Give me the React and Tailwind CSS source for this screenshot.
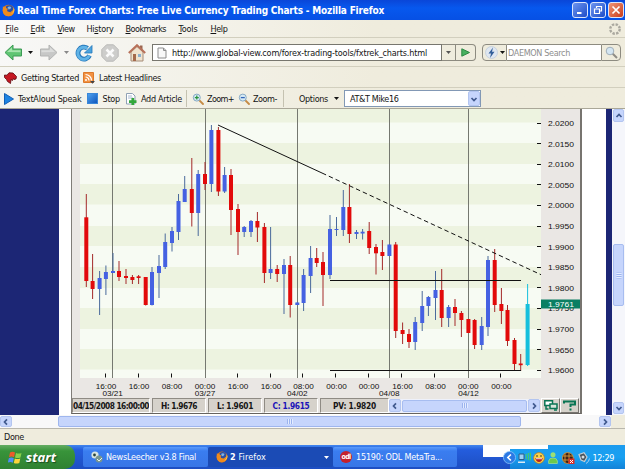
import { useLayoutEffect, useRef } from 'react';

// Single-line label whose tracking is adjusted so that it fills w pixels.
function Label({ w, children, className = '' }) {
  const ref = useRef(null);
  useLayoutEffect(() => {
    const el = ref.current;
    el.style.letterSpacing = '0px';
    const natural = el.getBoundingClientRect().width;
    el.style.letterSpacing = `${(w - natural) / el.textContent.length}px`;
  }, [w]);
  return (
    <span ref={ref} className={`block w-max flex-none pt-px whitespace-nowrap ${className}`}>
      {children}
    </span>
  );
}

const RED = '#e20a0a';
const BLUE = '#4561e2';
const CYAN = '#16bfdc';

// x, wick top, wick bottom, body top, body bottom, direction
const candles = [
  [86.3, 194, 287, 217.3, 281, 'r'], [92.6, 254, 299, 281, 289, 'r'], [99.6, 271, 315, 278, 289, 'b'],
  [105.9, 265.5, 295, 272, 279, 'b'], [113, 253, 273, 271, 273, 'b'], [119, 261, 281, 271, 277, 'r'],
  [126, 269, 284, 276, 278, 'r'], [132.4, 275, 284, 277, 280, 'r'], [138.6, 275, 284, 276.3, 278, 'r'],
  [145.7, 277, 305.5, 277, 305, 'r'], [152, 267, 305.5, 272, 305, 'b'], [159, 255, 298, 266, 273, 'b'],
  [165.2, 233.5, 269, 242, 267, 'b'], [172, 227, 251.5, 231, 243, 'b'], [178.5, 194, 240, 201, 232, 'b'],
  [184.7, 176, 202, 189, 202, 'b'], [191.8, 158, 226.5, 189, 213, 'r'], [198.2, 170, 236, 174, 213, 'b'],
  [205, 162, 190, 174, 184, 'r'], [211.4, 125, 192, 130, 184, 'b'], [218.4, 127, 196, 130, 191.5, 'r'],
  [224.6, 167, 193, 175, 191.5, 'b'], [231, 169, 235, 175, 210, 'r'], [238, 204, 255, 209, 232, 'r'],
  [244.2, 226, 237, 227, 232, 'b'], [251, 220, 237, 221, 232, 'b'], [257.4, 212, 242, 221, 227.5, 'r'],
  [264.4, 223, 283, 227, 273, 'r'], [270.6, 227, 279, 269, 273, 'b'], [277.2, 265, 282, 269, 274, 'r'],
  [284, 259, 314, 265, 274, 'b'], [290.2, 256, 317.5, 265, 305, 'r'], [297.3, 302, 305, 302.5, 305, 'b'],
  [303.6, 269, 311, 275, 303, 'b'], [310.6, 246, 293, 258, 276, 'b'], [316.7, 248, 267, 258, 263, 'r'],
  [323, 252, 306, 262, 275, 'r'], [330, 215, 279, 229, 275, 'b'], [336.5, 217, 236, 229, 230, 'b'],
  [343.3, 190, 236, 207, 230, 'b'], [349.4, 184, 243, 207, 234, 'r'], [356.5, 230, 239, 232, 234, 'b'],
  [362.6, 229, 239.5, 231.7, 233.5, 'b'], [369.2, 222, 254, 231, 248, 'r'], [376, 244, 274.5, 247, 253.3, 'r'],
  [382.4, 240, 270, 252, 256, 'r'], [389.4, 244.5, 256, 244.5, 256, 'b'], [395.7, 242, 338, 244.5, 331, 'r'],
  [402.6, 322.5, 344, 330, 334, 'r'], [409, 329, 348, 334, 342, 'r'], [415.2, 317, 350, 322, 342, 'b'],
  [422.2, 291, 331, 306, 323, 'b'], [428.4, 296, 316, 297, 306, 'b'], [435.5, 271, 320, 290, 298, 'b'],
  [441.7, 269, 327, 290, 318, 'r'], [448.6, 305, 327, 307, 318, 'b'], [455, 299, 326, 307, 313, 'r'],
  [461.4, 311, 337, 313, 320, 'r'], [468.4, 319, 333, 319, 333, 'r'], [474.6, 319, 349, 320, 345, 'r'],
  [481.7, 317, 350, 326, 345, 'b'], [488, 256, 336, 260, 327, 'b'], [494.7, 249, 312, 260, 305, 'r'],
  [501.4, 288, 324, 304, 311, 'r'], [507.5, 305, 346, 310, 341, 'r'], [514.5, 338, 370, 340, 364, 'r'],
  [520.7, 354, 371, 363.5, 365.2, 'r'], [527.6, 284, 366, 304, 365, 'c'],
];

const body = { r: RED, b: BLUE, c: CYAN };
const wick = { r: '#a32a2a', b: '#4a6a9c', c: CYAN };

const times = [
  [106, '16:00'], [139, '16:00'], [172, '08:00'], [205, '00:00'], [238, '16:00'], [271, '16:00'], [303.5, '08:00'],
  [336.5, '00:00'], [369, '00:00'], [402.5, '16:00'], [435.5, '08:00'], [468.3, '00:00'], [501.4, '00:00'],
];
const dates = [[112.7, '03/21'], [205, '03/27'], [297.3, '04/02'], [389.3, '04/08'], [468.5, '04/12']];
const prices = ['2.0200', '2.0150', '2.0100', '2.0050', '2.0000', '1.9950', '1.9900', '1.9850', '1.9800', '1.9750', '1.9700', '1.9650', '1.9600'];
const bands = [[109, 122.5], [143, 164], [184, 204.5], [226, 246], [267, 288], [308, 329], [349, 369.5]];

function Chart() {
  return (
    <svg viewBox="72 109 508 289" className="block h-[289px] w-[508px] flex-none [font-family:'Liberation_Sans',sans-serif]">
      <rect x="72" y="109" width="508" height="289" fill="#eae7e4" />
      <rect x="80" y="109" width="461" height="269" fill="#f7fbf3" />
      {bands.map(([a, b]) => <rect key={a} x="80" y={a} width="461" height={b - a} fill="#edf3e0" />)}
      {dates.map(([x]) => <rect key={x} x={Math.floor(x)} y="109" width="1" height="269" fill="#757870" />)}
      {candles.map(([x, wt, wb, bt, bb, d]) => (
        <g key={x}>
          <rect x={x - 0.5} y={wt} width="1" height={wb - wt} fill={wick[d]} />
          <rect x={x - 2} y={bt} width="4" height={bb - bt} fill={body[d]} />
        </g>
      ))}
      <g stroke="#111" strokeWidth="1" fill="none">
        <path d="M218 125L322 173" />
        <path d="M322 173L541 274.7" strokeDasharray="4.5 3" />
        <path d="M330 280.5H521M330 370.5H521" />
        {times.filter(([x]) => x !== 205 && x !== 468.3).map(([x]) => <path key={x} d={`M${Math.floor(x) - 0.5} 373.5V377.5`} />)}
        {prices.map((p, i) => <path key={p} d={`M537 ${Math.floor(123 + i * 20.6) + 0.5}H541`} />)}
      </g>
      <g fontSize="8" fill="#111" textAnchor="middle">
        {times.map(([x, t]) => <text key={x} x={x} y="388.7" textLength="20.5" lengthAdjust="spacingAndGlyphs">{t}</text>)}
        {dates.map(([x, t]) => <text key={x} x={x} y="396" textLength="20.5" lengthAdjust="spacingAndGlyphs">{t}</text>)}
        {prices.map((t, i) => <text key={t} x="561" y={126 + i * 20.6} textLength="26" lengthAdjust="spacingAndGlyphs">{t}</text>)}
      </g>
      <rect x="541" y="299.5" width="39" height="9" fill="#0a7f63" />
      <text x="561" y="307" fontSize="8" fill="#fff" textAnchor="middle" textLength="26" lengthAdjust="spacingAndGlyphs">1.9761</text>
    </svg>
  );
}

function FirefoxIcon({ className }) {
  return (
    <svg viewBox="0 0 14 14" className={`flex-none ${className}`}>
      <circle cx="7" cy="7" r="6.3" fill="#ec7a13" />
      <circle cx="7.8" cy="5.6" r="4.3" fill="#2a4fa6" />
      <path d="M6 3.5q2-1.5 4 0l-1 2-2 .5z" fill="#7fb4e6" />
      <path d="M1 2.5l1.6 1.2L4 3l.6 1.6 2 .6-1.2 1.3.6 1.6 3 .7 2.6-2L13 4.5c1 5-2 8.500-6 8.700C3 13.200.6 10 .8 6z" fill="#f08b1d" />
      <path d="M12.300 3.500q1.500 5-3 7.500 4-1 4-5z" fill="#fbd85b" />
    </svg>
  );
}

function Chevron({ d, className = '' }) {
  const paths = { up: 'M1.500 5L4 2.500 6.500 5', down: 'M1.500 3L4 5.500 6.500 3', left: 'M5 1.300L2.500 4 5 6.700', right: 'M3 1.300L5.500 4 3 6.700' };
  return (
    <span className={`flex flex-none items-center justify-center rounded-[2px] border border-[#b3c5f0] bg-[#c6d5fc] ${className}`}>
      <svg viewBox="0 0 8 8" className="size-2"><path d={paths[d]} fill="none" stroke="#40598e" strokeWidth="1.700" /></svg>
    </span>
  );
}

function Caret({ className = '' }) {
  return <svg viewBox="0 0 5 3" className={`h-[3px] w-[5px] flex-none ${className}`}><path d="M0 0H5L2.500 3z" fill="currentColor" /></svg>;
}

function Arrow({ flip, a, b, c }) {
  return (
    <svg viewBox="0 0 19 17" className={`h-[17px] w-[19px] flex-none ${flip ? '-scale-x-100' : ''}`}>
      <path d="M1 8.500L9 1V5H17.500V12H9V16z" fill={a} stroke={c} strokeWidth="1" strokeLinejoin="round" />
      <path d="M3 8L8 3.300V6.300H16.500V8.300z" fill={b} />
    </svg>
  );
}

function Magnifier({ sign }) {
  return (
    <svg viewBox="0 0 12 12" className="size-3 flex-none">
      <path d="M7 7l4 4" stroke="#c58a45" strokeWidth="1.800" strokeLinecap="round" />
      <circle cx="4.800" cy="4.600" r="3.500" fill="#d8eaf4" stroke="#86a9c4" />
      <path d={sign === '+' ? 'M2.800 4.600H6.800M4.800 2.600V6.600' : 'M2.800 4.600H6.800'} stroke={sign === '+' ? '#2b9440' : '#3265b8'} strokeWidth="1.300" />
    </svg>
  );
}

function WindowButton({ red, children }) {
  return (
    <span className={`flex size-4 flex-none items-center justify-center rounded-[3px] border border-[#dbe5fb] ${red ? 'bg-linear-to-br from-[#ee9476] to-[#c93a12]' : 'bg-linear-to-br from-[#6d93ef] to-[#1e4cc8]'}`}>
      <svg viewBox="0 0 12 12" className="size-3" fill="none" stroke="#fff">{children}</svg>
    </span>
  );
}

const menu = [['File', 'F', 0, 13, 25], ['Edit', 'E', 0, 14, 27], ['View', 'V', 0, 17, 29], ['History', 's', 2, 27, 39], ['Bookmarks', 'B', 0, 40.5, 53], ['Tools', 'T', 0, 19, 32], ['Help', 'H', 0, 17, 30]];

function Cell({ cell, w, children, color = 'text-[#151515]' }) {
  return (
    <div className={`flex h-[15px] flex-none items-center justify-center overflow-hidden border border-t-[#8f8b84] border-r-white border-b-white border-l-[#8f8b84] bg-[#d6d2cb] text-[8.300px] font-bold [font-family:'DejaVu_Sans_Condensed','DejaVu_Sans',sans-serif] ${cell} ${color}`}>
      <Label w={w}>{children}</Label>
    </div>
  );
}

function Grip() {
  return <span className="h-[5px] w-[6px] bg-[repeating-linear-gradient(90deg,#9cb4ee_0_1px,#e4ecff_1px_2px)]" />;
}

export default function App() {
  return (
    <div className="flex h-[469px] w-[625px] flex-col overflow-hidden bg-[#efecdd] text-[9px] leading-none text-[#141414] [font-family:'DejaVu_Sans_Condensed','DejaVu_Sans',sans-serif]">
      <header className="flex h-5 flex-none items-center bg-linear-to-b from-[#0a46d8] via-[#0758ee] via-40% to-[#0650e4] pl-[2px] text-white">
        <FirefoxIcon className="mr-[2px] size-[13px]" />
        <Label w={367} className="text-[10px] font-bold">Real Time Forex Charts: Free Live Currency Trading Charts - Mozilla Firefox</Label>
        <div className="mr-[1px] ml-auto flex gap-[2px]">
          <WindowButton><path d="M3 9H7.500" strokeWidth="2" /></WindowButton>
          <WindowButton><path d="M4.500 4V2.500H9.500V7H8M2.500 5H7.500V9.500H2.500z" strokeWidth="1.200" /></WindowButton>
          <WindowButton red><path d="M2.500 2.500L9.500 9.500M9.500 2.500L2.500 9.500" strokeWidth="1.700" /></WindowButton>
        </div>
      </header>

      <nav className="flex h-[18px] flex-none items-center border-b border-[#d2cfbe] bg-linear-to-r from-[#fafafa] to-[#efecdd] to-60% pt-px pl-[5.500px]">
        {menu.map(([name, key, at, w, step]) => (
          <div key={name} className="flex-none" style={{ width: step }}>
            <Label w={w}>{name.slice(0, at)}<u className="underline-offset-1">{key}</u>{name.slice(at + 1)}</Label>
          </div>
        ))}
        <svg viewBox="0 0 12 12" className="mr-[4px] ml-auto size-3">
          <circle cx="6" cy="6" r="4.700" fill="none" stroke="#aaa89f" strokeWidth="2.400" strokeDasharray="2.400 1.290" />
        </svg>
      </nav>

      <div className="flex h-[29px] flex-none items-center border-b border-[#d2cfbe] bg-linear-to-r from-[#f8f8f7] to-[#efecdd] to-60% pt-px pl-[4px]">
        <Arrow a="#5fc573" b="#a6e4ae" c="#3c9a55" />
        <Caret className="mr-[6px] ml-[5px]" />
        <Arrow flip a="#c7c8c7" b="#dcdddc" c="#b3b4b3" />
        <Caret className="mr-[6px] ml-[6px] text-[#888]" />
        <svg viewBox="0 0 18 18" className="size-[18px] flex-none">
          <path d="M14.500 11.500A6 6 0 1 1 12.500 4.200" fill="none" stroke="#2577ba" strokeWidth="4.800" />
          <path d="M14.300 11.500A6 6 0 1 1 12.300 4.400" fill="none" stroke="#60b3e6" strokeWidth="3" />
          <path d="M17 1.500V9H9.500z" fill="#4aa3de" stroke="#2577ba" strokeWidth=".8" />
        </svg>
        <svg viewBox="0 0 18 18" className="ml-[8px] size-[18px] flex-none">
          <path d="M5.500 .8H12.500L17.200 5.500V12.500L12.500 17.200H5.500L.8 12.500V5.500z" fill="#cdcdcb" stroke="#b9b9b7" />
          <path d="M5.500 5.500L12.500 12.500M12.500 5.500L5.500 12.500" stroke="#fafafa" strokeWidth="2.500" />
        </svg>
        <svg viewBox="0 0 18 18" className="mr-[6px] ml-[9px] size-[18px] flex-none">
          <path d="M12 1.500H14.500V7H12z" fill="#9b6650" />
          <path d="M3 8L9 2.500 15 8V17H3z" fill="#f0e3cf" stroke="#a58b76" />
          <path d="M.8 9L9 1.200 17.200 9" fill="none" stroke="#b7715a" strokeWidth="2" />
          <path d="M5 10H8V17H5z" fill="#a56a4c" /><path d="M10 10H13V13H10z" fill="#8bb0ce" />
        </svg>
        <div className="flex h-[17px] w-[290px] flex-none items-center border border-[#77766e] bg-white">
          <svg viewBox="0 0 10 12" className="ml-[4px] h-3 w-[10px] flex-none"><path d="M1 1H6.500L9 3.500V11H1z" fill="#f8f8f8" stroke="#8d8d8d" /><path d="M6.500 1V3.500H9" fill="none" stroke="#8d8d8d" /></svg>
          <Label w={255} className="ml-[5px]">http://www.global-view.com/forex-trading-tools/fxtrek_charts.html</Label>
        </div>
        <div className="flex h-[17px] w-[14px] flex-none items-center justify-center border-y border-r border-[#8d8b80]"><Caret className="text-[#555]" /></div>
        <div className="flex h-[17px] w-[20px] flex-none items-center justify-center rounded-r border-y border-r border-[#8d8b80]">
          <svg viewBox="0 0 9 9" className="size-[9px]"><path d="M.8.800L8.500 4.500.8 8.200z" fill="#48b160" stroke="#2b8942" /></svg>
        </div>
        <div className="ml-[6px] flex h-[17px] w-[25px] flex-none items-center gap-[2px] rounded-l border border-[#8d8b80] pl-[2px]">
          <svg viewBox="0 0 13 13" className="size-[13px]"><circle cx="6.500" cy="6.500" r="6" fill="#dfe7f1" stroke="#b5c5d8" strokeWidth=".6" /><path d="M8 1.500L3.500 7.500H6L5 12 9.500 5.800H7z" fill="#34609b" /></svg>
          <Caret />
        </div>
        <div className="flex h-[17px] w-[94px] flex-none items-center border-y border-[#8d8b80] bg-white pl-[1px] text-[#8e8e8e]">
          <Label w={62}>DAEMON Search</Label>
        </div>
        <div className="flex h-[17px] w-[20px] flex-none items-center justify-center rounded-r border border-[#8d8b80]">
          <svg viewBox="0 0 13 13" className="size-[13px]"><path d="M7.500 7.500L12 12" stroke="#8f8d85" strokeWidth="2" /><circle cx="5" cy="5" r="3.800" fill="#d4e6f2" stroke="#a0aeb9" /></svg>
        </div>
      </div>

      <div className="flex h-[21px] flex-none items-center border-b border-[#d2cfbe] bg-linear-to-r from-[#f7f7f4] to-[#efecdd] to-60% pt-[2px] pl-[4px]">
        <svg viewBox="0 0 13 12" className="h-3 w-[13px] flex-none"><path d="M.5 3L3 3.200 5 .8 9 1 12.500 4.500 12 7 10 7.500 9.500 6.500 8.500 8.500 7 7.500 6.500 11.500 3.500 9.500 2.500 7.500.5 5.500z" fill="#c51822" stroke="#5c080c" strokeWidth=".8" /></svg>
        <div className="w-[62px] flex-none pl-[4px]"><Label w={58}>Getting Started</Label></div>
        <svg viewBox="0 0 12 12" className="ml-[4px] size-3 flex-none">
          <path d="M.5.500H10.500V10.500H.5z" fill="#f29142" stroke="#dc792b" />
          <path d="M2.500 5a3.500 3.500 0 0 1 3.500 3.500M2.500 2.500a6 6 0 0 1 6 6" fill="none" stroke="#fff" strokeWidth="1.200" /><circle cx="3" cy="8" r="1" fill="#fff" />
          <path d="M7 9H12L9.500 11.800z" fill="#444" />
        </svg>
        <Label w={62} className="ml-[4px]">Latest Headlines</Label>
      </div>

      <div className="flex h-[21px] flex-none items-center border-b border-[#aaa798] bg-linear-to-r from-[#f5f5f0] to-[#efecdd] to-60% pt-px pl-[4px]">
        <svg viewBox="0 0 10 12" className="h-3 w-[10px] flex-none"><path d="M.5.500L9.500 6 .5 11.500z" fill="#1e84e2" stroke="#1260b5" /></svg>
        <Label w={63.500} className="ml-[4px]">TextAloud Speak</Label>
        <span className="ml-[5px] size-[11px] flex-none border border-[#3a87d8] bg-linear-to-br from-[#4da0ee] to-[#1057be]" />
        <Label w={17.500} className="ml-[5px]">Stop</Label>
        <svg viewBox="0 0 11 12" className="ml-[6px] h-3 w-[11px] flex-none"><path d="M.5.500H6.500L9 3V11H.5z" fill="#fff" stroke="#8fa0b5" /><path d="M2 3H6M2 5H7" stroke="#a9b9d2" /><path d="M3 8.700H10.500M6.800 5V12" stroke="#33a83b" strokeWidth="2.700" /></svg>
        <Label w={41} className="ml-[4px]">Add Article</Label>
        <span className="ml-[4px] h-[17px] w-px flex-none bg-[#c5c2b1]" />
        <div className="ml-[5px] flex w-[46px] flex-none items-center gap-[3px]"><Magnifier sign="+" /><Label w={27}>Zoom+</Label></div>
        <div className="flex w-[45px] flex-none items-center gap-[3px]"><Magnifier sign="-" /><Label w={24}>Zoom-</Label></div>
        <div className="flex h-[17px] w-[49px] flex-none items-center border-l border-[#c5c2b1] pl-[15px]"><Label w={29}>Options</Label></div>
        <Caret className="ml-[2px]" />
        <div className="ml-[5px] flex h-[17px] w-[137px] flex-none items-center justify-between border border-[#8298b5] bg-white pl-[5px]">
          <Label w={48.500}>AT&amp;T Mike16</Label>
          <Chevron d="down" className="h-[15px] w-[12px]" />
        </div>
      </div>

      <main className="flex h-[306px] flex-none bg-white">
        <div className="w-[59px] flex-none bg-[#1c2675]" />
        <div className="ml-[12px] h-[305px] w-[511px] flex-none border-r-2 border-b border-l border-r-[#77746f] border-b-[#66635f] border-l-[#807d78] bg-[#eae7e4]">
          <Chart />
          <div className="flex h-[15px] items-center gap-[2px] bg-[#eae7e4]">
            <Cell cell="w-[78px]" w={76}>04/15/2008 16:00:00</Cell>
            <Cell cell="w-[54px]" w={36}>H: 1.9676</Cell>
            <Cell cell="w-[54px]" w={36}>L: 1.9601</Cell>
            <Cell cell="w-[54px]" w={37} color="text-[#1a12b8]">C: 1.9615</Cell>
            <Cell cell="w-[69px]" w={43}>PV: 1.9820</Cell>
            <div className="-ml-[2px] flex h-[14px] w-[151px] flex-none items-center bg-[#eef1fb]">
              <Chevron d="left" className="h-[13px] w-[12px]" />
              <div className="mx-[1px] flex h-[12px] flex-1 items-center justify-center rounded-[2px] border border-[#a7bdf0] bg-[#c6d5fc]"><Grip /></div>
              <Chevron d="right" className="h-[13px] w-[12px]" />
            </div>
            <div className="-ml-px flex h-[15px] w-[19px] flex-none items-center justify-center border border-white border-r-[#77746f] border-b-[#77746f] bg-[#d6d2cb]">
              <svg viewBox="0 0 14 11" className="h-[11px] w-[14px]"><path d="M.8.800H8.500V5.500H.8z" fill="#fff" stroke="#0a7554" strokeWidth="1.500" /><path d="M6 4H13V8.500H6z" fill="#d8e6dc" stroke="#0a7554" strokeWidth="1.500" /><path d="M2 6V9H4.500M10 10H13" stroke="#0a7554" fill="none" strokeWidth="1.500" /></svg>
            </div>
            <div className="-ml-[2px] flex h-[15px] w-[19px] flex-none items-center justify-center border border-white border-r-[#77746f] border-b-[#77746f] bg-[#d6d2cb]">
              <svg viewBox="0 0 14 11" className="h-[11px] w-[14px]"><path d="M1 3.500V1.500H12V4.500H7.500V7M7.500 8.500V10.500" stroke="#0a7554" fill="none" strokeWidth="2" /></svg>
            </div>
          </div>
        </div>
        <div className="ml-[24px] w-[6px] flex-none bg-[#1c2675]" />
        <div className="flex flex-1 flex-col items-center bg-[#f5f6fb]">
          <Chevron d="up" className="h-[13px] w-[11px]" />
          <div className="mt-[122px] flex h-[62px] w-[11px] items-center justify-center rounded-[2px] border border-[#a7bdf0] bg-[#c6d5fc]"><span className="flex rotate-90"><Grip /></span></div>
          <Chevron d="down" className="mt-auto mb-[1px] h-[12px] w-[11px]" />
        </div>
      </main>

      <div className="flex h-[14px] flex-none items-center border-b border-[#b9b7ad] bg-[#f8f8f9]">
        <Chevron d="left" className="h-[11px] w-[12px]" />
        <div className="ml-[46px] flex h-[11px] w-[463px] flex-none items-center justify-center rounded-[2px] border border-[#9fb6ee] bg-[#c6d5fc]"><Grip /></div>
        <Chevron d="right" className="ml-[78px] h-[11px] w-[12px]" />
        <span className="h-full flex-1 bg-[#efecdd]" />
      </div>

      <div className="flex h-[16px] flex-none items-center pl-[4px]"><Label w={20}>Done</Label></div>

      <footer className="flex h-[24px] flex-none items-center bg-linear-to-b from-[#4286ee] via-[#245ddd] via-20% to-[#1d4ec2] text-white">
        <div className="flex h-full w-[75px] flex-none items-center rounded-r-[10px] bg-linear-to-b from-[#65ad62] via-[#38943a] via-25% to-[#2f8132] pl-[8px]">
          <svg viewBox="0 0 15 15" className="size-[15px] flex-none">
            <path d="M2 2.500q2.500-1.500 5 0l-1 4.700q-2.500-1.300-5 0z" fill="#ee5b2b" /><path d="M8 3q2.500 1.200 5.500 0l-1 4.500q-3 1.200-5.500 0z" fill="#8bd14a" />
            <path d="M.8 8.200q2.500-1.300 5 0l-1 4.500q-2.500-1.300-5 0z" fill="#4e8df5" /><path d="M6.800 8.500q2.500 1.200 5.500 0l-1 4.500q-3 1.200-5.500 0z" fill="#fbd53b" />
          </svg>
          <Label w={30} className="ml-[3px] text-[13px] font-bold italic [font-family:'Open_Sans',sans-serif] [text-shadow:1px_1px_1px_#1b4d1e]">start</Label>
        </div>
        <div className="ml-[8px] flex h-[20px] w-[125px] flex-none items-center rounded-[2px] bg-linear-to-b from-[#5a9bfa] via-[#3a7df0] via-20% to-[#3876e6] pl-[8px]">
          <svg viewBox="0 0 12 12" className="size-3 flex-none"><circle cx="4" cy="4" r="3.600" fill="#d9e5e0" /><circle cx="8" cy="8" r="3.500" fill="#78968f" /><circle cx="3.500" cy="4" r="1.400" fill="#27423b" /><path d="M6 8l2 2 3-3" stroke="#e9f4ee" fill="none" /></svg>
          <Label w={90} className="ml-[3px]">NewsLeecher v3.8 Final</Label>
        </div>
        <div className="flex h-[20px] w-[125px] flex-none items-center rounded-[2px] bg-[#1b4bb5] pl-[8px]">
          <FirefoxIcon className="size-[12px]" />
          <Label w={36} className="ml-[2px]"><b>2</b> Firefox</Label>
          <Caret className="mr-[4px] ml-auto" />
        </div>
        <div className="flex h-[20px] w-[124px] flex-none items-center rounded-[2px] bg-linear-to-b from-[#5a9bfa] via-[#3a7df0] via-20% to-[#3876e6] pl-[7px]">
          <span className="flex size-[12px] flex-none items-center justify-center rounded-full bg-[#c5202b] text-[7px] font-bold"><Label w={9}>odl</Label></span>
          <Label w={86} className="ml-[4px]">15190: ODL MetaTra...</Label>
        </div>
        <div className="mb-auto ml-[26px] h-[12px] w-[27px] flex-none bg-[#fefefe]" />
        <div className="relative flex h-full flex-1 items-center bg-linear-to-b from-[#1c9bee] via-[#18a0f1] to-[#1282d8]">
          <span className="absolute top-0 left-0 h-[4px] w-[38px] bg-white" />
          <svg viewBox="0 0 12 12" className="absolute top-[6px] -left-[7px] size-[13px]"><circle cx="6" cy="6" r="5.600" fill="#2c79e4" stroke="#8fc7fa" strokeWidth=".7" /><path d="M7.300 3.200L4.500 6 7.300 8.800" stroke="#fff" fill="none" strokeWidth="1.500" /></svg>
          <div className="mt-[2px] ml-[8px] flex flex-none items-center gap-[3px]">
            <svg viewBox="0 0 13 12" className="h-3 w-[13px]"><path d="M1 2H6V7.500H1z" fill="#9bd1f5" stroke="#2f5c88" /><path d="M0 9.500H7V11H0z" fill="#dbe9f5" /><path d="M8 2q1 2.500 0 5M10 1q1.600 3.500 0 7M12 .5q1.500 4 0 8" stroke="#52d34b" fill="none" /></svg>
            <svg viewBox="0 0 12 12" className="ml-[-1px] size-3"><circle cx="6" cy="6" r="5.400" fill="#fbd24a" stroke="#b7751a" strokeWidth=".7" /><path d="M2.300 6H9.700Q9 10 6 10T2.300 6" fill="#b32020" /><path d="M3 6.300H9V7.200H3z" fill="#fff" /><circle cx="4" cy="4" r=".8" fill="#222" /><circle cx="8" cy="4" r=".8" fill="#222" /></svg>
            <svg viewBox="0 0 10 12" className="h-3 w-[10px]"><circle cx="5" cy="2.800" r="2.500" fill="#9be075" /><path d="M.6 11.500V9Q1 6 5 6T9.400 9V11.500z" fill="#6cc94c" stroke="#b4ea97" strokeWidth=".6" /></svg>
            <svg viewBox="0 0 13 12" className="ml-[1px] h-3 w-[13px]"><circle cx="5.800" cy="6" r="5.500" fill="#3b2117" stroke="#d69a3d" strokeWidth=".8" /><path d="M3 1V11M7 1V11M1 4H11M1 8H11" stroke="#de9b38" strokeWidth=".9" /><path d="M6.500 6.500H12.500V12H6.500z" fill="#dc2c24" /><path d="M8 8l3 3M11 8l-3 3" stroke="#fff" /></svg>
            <svg viewBox="0 0 12 12" className="size-3"><path d="M1 2.500L6 .7 9 5 6.500 9.500 3 8z" fill="#47525a" stroke="#c4ced6" strokeWidth="1.200" /><circle cx="5" cy="5" r="1.500" fill="#d6dde2" /><path d="M8 11.500Q11 10 11.500 6.500" stroke="#a7cdf1" fill="none" /></svg>
          </div>
          <Label w={21.500} className="mt-[2px] mr-[11px] ml-auto">12:29</Label>
        </div>
      </footer>
    </div>
  );
}
